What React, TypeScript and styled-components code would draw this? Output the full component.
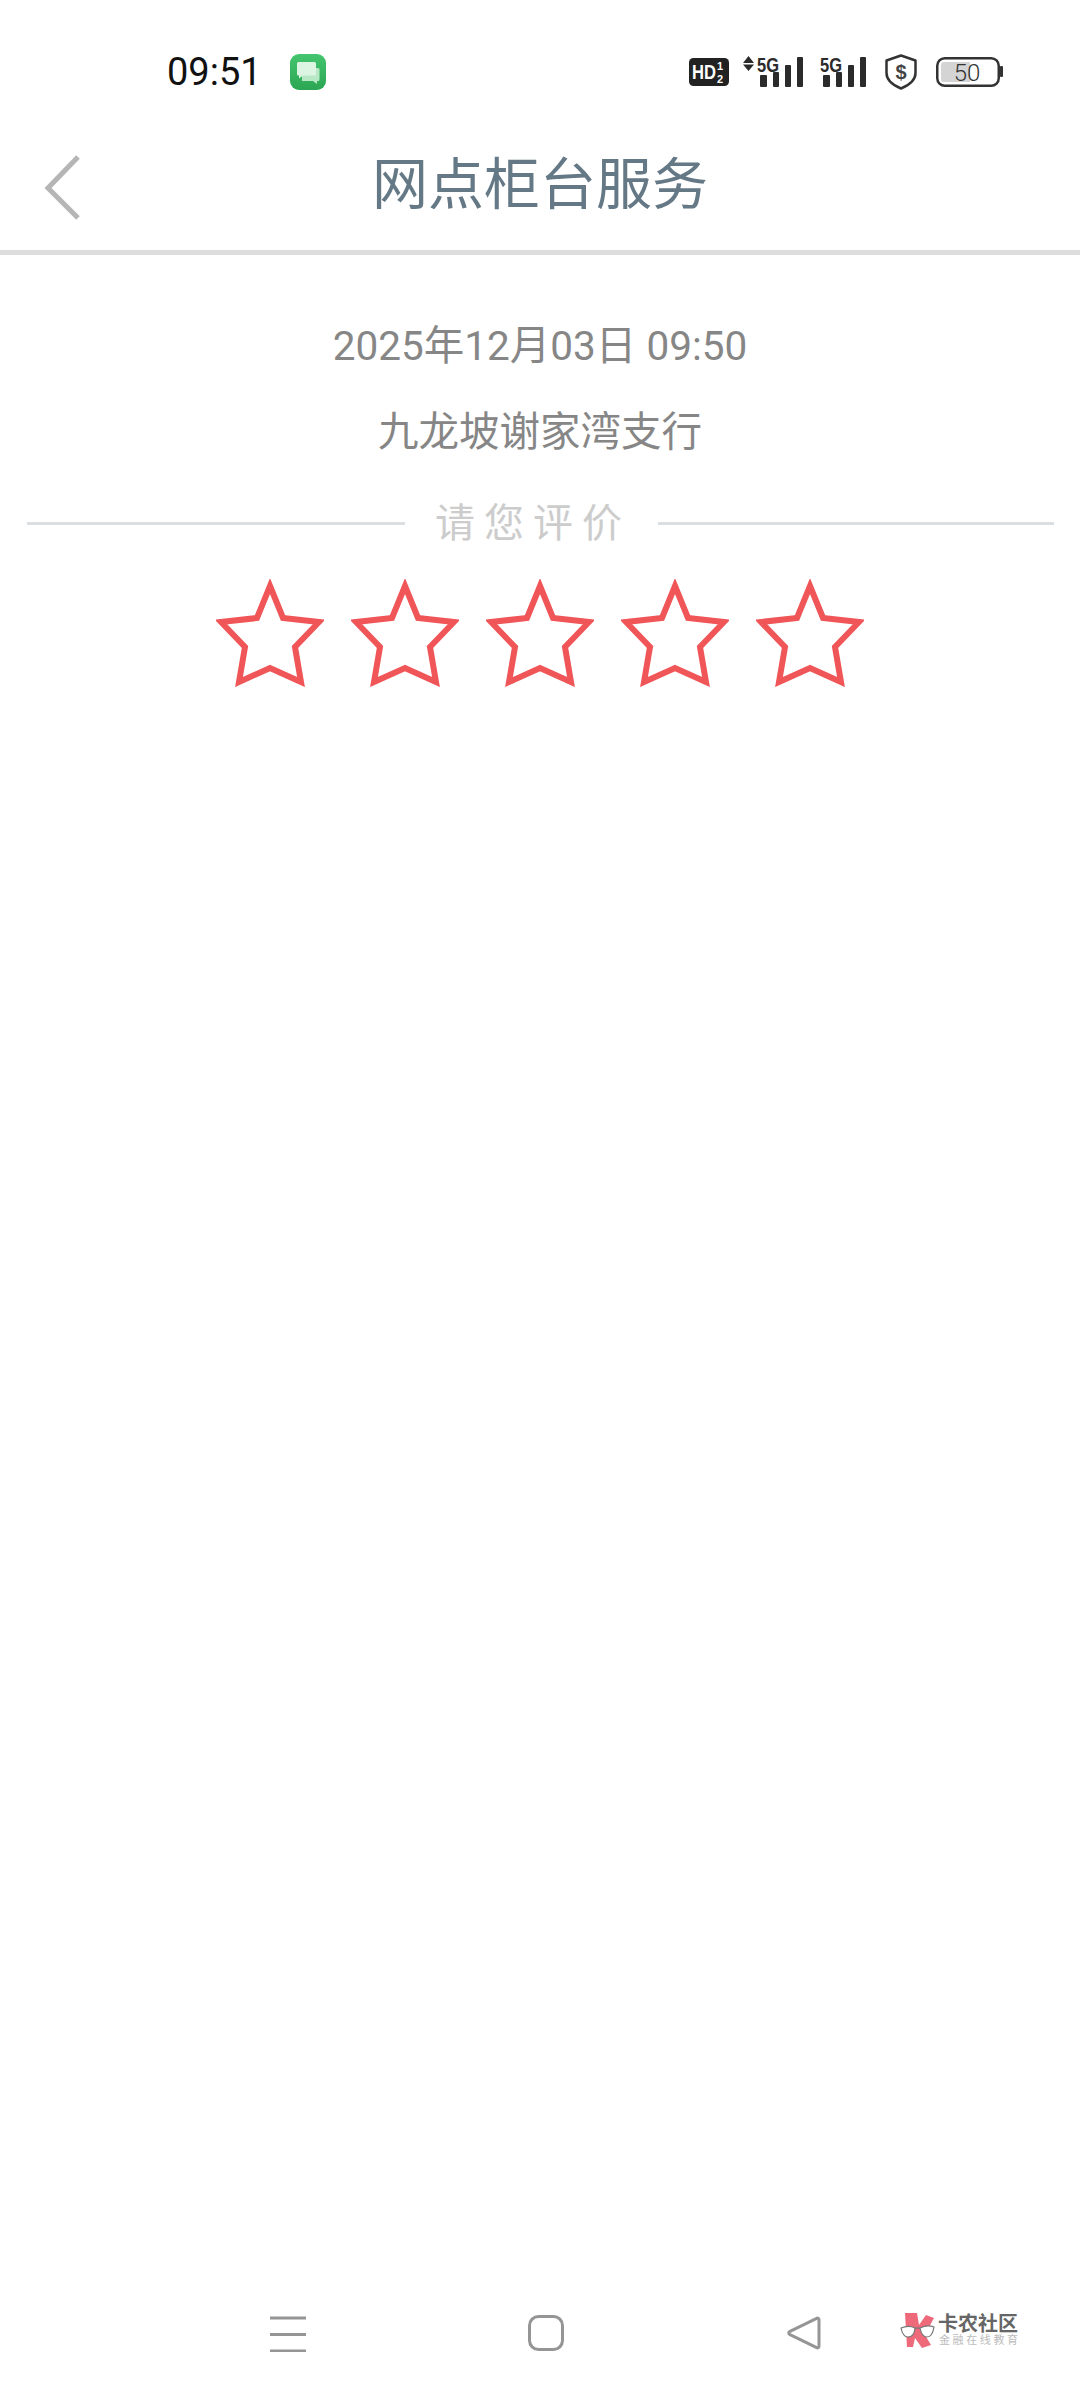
import React from "react";
import styled, { createGlobalStyle } from "styled-components";

const CJK = `Roboto, "Noto Sans CJK SC", sans-serif`;

const Global = createGlobalStyle`
  html, body { margin: 0; padding: 0; background: #fff; }
  * { box-sizing: border-box; }
`;
const Page = styled.div`
  width: 1080px; height: 2400px; display: flex; flex-direction: column;
  background: #fff; font-family: ${CJK};
`;
const StatusBar = styled.div`
  height: 118px; padding: 54px 77px 0 167px; display: flex; align-items: flex-start;
`;
const StatusRow = styled.div`
  height: 36px; flex: 1; display: flex; align-items: center;
`;
const Clock = styled.span`
  font-size: 38px; line-height: 36px; color: #111; width: 123px;
`;
const StatusIcons = styled.div`
  margin-left: auto; display: flex; align-items: center;
`;
const StatusGlyph = styled.svg<{ $gap: number }>`
  display: block; margin-left: ${(p) => p.$gap}px; flex: none;
`;
const Header = styled.header`
  height: 137px; border-bottom: 5px solid #dddddd; display: flex; align-items: center;
  justify-content: center; position: relative;
`;
const BackIcon = styled.svg`
  position: absolute; left: 43px; top: 34px;
`;
const Title = styled.h1`
  margin: 0; font-size: 56px; font-weight: 400; color: #657885; line-height: 1; padding-top: 2px;
`;
const Main = styled.main`
  flex: 1; display: flex; flex-direction: column; align-items: center;
`;
const DateLine = styled.div`
  margin-top: 66px; font-size: 40.500px; line-height: 50px; color: #868686;
`;
const Branch = styled.div`
  margin-top: 36px; font-size: 40.500px; line-height: 50px; color: #868686;
`;
const RateRow = styled.div`
  margin-top: 41px; width: 100%; padding: 0 26px 0 27px; display: flex; align-items: center; height: 50px;
`;
const RateLine = styled.div<{ $fixed?: number }>`
  height: 3px; background: #dcdfe2;
  ${(p) => (p.$fixed ? `width: ${p.$fixed}px; flex: none;` : "flex: 1;")}
`;
const RateLabel = styled.span`
  width: 253px; padding: 2px 0 0 30px; font-size: 40px; letter-spacing: 9px; color: #cccccc; white-space: nowrap; line-height: 50px;
`;
const Stars = styled.div`
  margin-top: 31px; display: flex; gap: 27px;
`;
const StarIcon = styled.svg`
  display: block;
`;
const NavBar = styled.nav`
  height: 118px; padding: 0 0 0 270px; display: flex; align-items: flex-start; position: relative;
`;
const NavIcon = styled.svg<{ $gap: number; $top: number }>`
  display: block; margin-left: ${(p) => p.$gap}px; margin-top: ${(p) => p.$top}px; flex: none;
`;
const Watermark = styled.div`
  margin-left: 79px; margin-top: 31px; height: 36px; display: flex; gap: 3px; align-items: flex-start;
`;
const WatermarkText = styled.div`
  display: flex; flex-direction: column; padding-top: 1px;
`;
const WatermarkName = styled.span`
  font-size: 20px; line-height: 20px; font-weight: 700; color: #666; white-space: nowrap;
`;
const WatermarkSub = styled.span`
  font-size: 11px; line-height: 14px; letter-spacing: 2.600px; color: #bbb; white-space: nowrap; margin-left: 1px;
`;

const Star = () => (
  <StarIcon width="108" height="108" viewBox="0 0 108 108">
    <polygon
      points="54,7 67,39 103,43 79,68 85,103 54,89 23,103 29,68 5,43 41,39"
      fill="none"
      stroke="#f05558"
      strokeWidth="6"
      strokeMiterlimit="8"
    />
  </StarIcon>
);

const Bars = ({ x }: { x: number }) => (
  <g fill="#2b2b2b">
    <rect x={x} y={19} width={7} height={12} rx={1} />
    <rect x={x + 13} y={16} width={6} height={15} rx={1} />
    <rect x={x + 25} y={9} width={6} height={22} rx={1} />
    <rect x={x + 37} y={1} width={6} height={30} rx={1} />
  </g>
);

const App = () => (
  <Page>
    <Global />
    <StatusBar>
      <StatusRow>
        <Clock>09:51</Clock>
        <svg width="36" height="36" viewBox="0 0 36 36">
          <defs>
            <linearGradient id="g" x1="0" y1="0" x2="0" y2="1">
              <stop offset="0" stopColor="#45c56f" />
              <stop offset="1" stopColor="#2ba653" />
            </linearGradient>
          </defs>
          <rect width="36" height="36" rx="9" fill="url(#g)" />
          <path d="M12 14h16a1.500 1.500 0 0 1 1.500 1.500v10a1.500 1.500 0 0 1-1.500 1.500h-1v3l-4-3H12z" fill="#b9e8c6" />
          <path d="M8.500 8h16a1.500 1.500 0 0 1 1.500 1.500V20a1.500 1.500 0 0 1-1.500 1.500H13l-4 3v-3h-.5A1.500 1.500 0 0 1 7 20V9.500A1.500 1.500 0 0 1 8.500 8z" fill="#dcf5e2" />
        </svg>
        <StatusIcons>
          <StatusGlyph $gap={0} width="40" height="28" viewBox="0 0 40 28">
            <rect width="40" height="28" rx="4.500" fill="#222" />
            <text x="3" y="21" fontFamily="Liberation Sans" fontWeight="700" fontSize="21" fill="#fff" textLength="24" lengthAdjust="spacingAndGlyphs">HD</text>
            <text x="28" y="12" fontFamily="Liberation Sans" fontWeight="700" fontSize="11" fill="#fff">1</text>
            <text x="28" y="25" fontFamily="Liberation Sans" fontWeight="700" fontSize="11" fill="#fff">2</text>
          </StatusGlyph>
          <StatusGlyph $gap={14} width="60" height="44" viewBox="0 -6 60 44">
            <path d="M5.500 0l5.500 7H0zM0 8.500h11l-5.500 6.500z" fill="#2b2b2b" />
            <text x="14" y="15.500" fontFamily="Liberation Sans" fontWeight="700" fontSize="21" fill="#2b2b2b" textLength="22" lengthAdjust="spacingAndGlyphs">5G</text>
            <Bars x={17} />
          </StatusGlyph>
          <StatusGlyph $gap={17} width="46" height="44" viewBox="0 -6 46 44">
            <text x="0" y="15.500" fontFamily="Liberation Sans" fontWeight="700" fontSize="21" fill="#2b2b2b" textLength="22" lengthAdjust="spacingAndGlyphs">5G</text>
            <Bars x={3} />
          </StatusGlyph>
          <StatusGlyph $gap={19} width="32" height="36" viewBox="0 0 32 36">
            <path d="M16 1.500L30.500 6.500V19c0 7-6 12-14.500 15.500C7.500 31 1.500 26 1.500 19V6.500z" fill="none" stroke="#333" strokeWidth="2.500" strokeLinejoin="round" />
            <text x="16" y="24.500" textAnchor="middle" fontFamily="Liberation Sans" fontWeight="700" fontSize="20" fill="#444">$</text>
          </StatusGlyph>
          <StatusGlyph $gap={19} width="67" height="30" viewBox="0 0 67 30">
            <rect x="1.250" y="1.250" width="61.500" height="27.500" rx="7.500" fill="#fff" stroke="#333" strokeWidth="2.500" />
            <path d="M8 5h26v20H8a3 3 0 0 1-3-3V8a3 3 0 0 1 3-3z" fill="#d4d4d4" />
            <text x="31" y="23.500" textAnchor="middle" fontFamily="Roboto" fontSize="24" fontWeight="300" fill="#333">50</text>
            <rect x="64" y="9" width="3" height="11" rx="1" fill="#333" />
          </StatusGlyph>
        </StatusIcons>
      </StatusRow>
    </StatusBar>
    <Header>
      <BackIcon width="40" height="70" viewBox="0 0 40 70">
        <path d="M35 5L5 36l30 30" fill="none" stroke="#b5b5b5" strokeWidth="5" />
      </BackIcon>
      <Title>网点柜台服务</Title>
    </Header>
    <Main>
      <DateLine>2025年12月03日 09:50</DateLine>
      <Branch>九龙坡谢家湾支行</Branch>
      <RateRow>
        <RateLine $fixed={378} />
        <RateLabel>请您评价</RateLabel>
        <RateLine />
      </RateRow>
      <Stars>
        <Star />
        <Star />
        <Star />
        <Star />
        <Star />
      </Stars>
    </Main>
    <NavBar>
      <NavIcon $gap={0} $top={34} width="36" height="36" viewBox="0 0 36 36">
        <path d="M0 2h36M0 18.500h36M0 35h36" stroke="#959595" strokeWidth="3" />
      </NavIcon>
      <NavIcon $gap={222} $top={33} width="36" height="36" viewBox="0 0 36 36">
        <rect x="1.500" y="1.500" width="33" height="33" rx="9" fill="none" stroke="#959595" strokeWidth="3" />
      </NavIcon>
      <NavIcon $gap={223} $top={34} width="34" height="34" viewBox="0 0 34 34">
        <path d="M32 3.500v27a1.500 1.500 0 0 1-2.300 1.200L2.500 18.300a1.500 1.500 0 0 1 0-2.600L29.700 2.300A1.500 1.500 0 0 1 32 3.500z" fill="none" stroke="#959595" strokeWidth="3" strokeLinejoin="round" />
      </NavIcon>
      <Watermark>
        <svg width="35" height="36" viewBox="0 0 35 36">
          <path d="M5 0h12l2 12 7-10 8 3-6 11-3 6 6 10-9 3-7-10-2 9H7z" fill="#ee6a7b" />
          <path d="M1 15c5-2 10-2 14 0-.5 6-3 9-7 9s-6-4-7-9zM20 15c4-2 9-3 14-1-1 6-3 10-7 10s-6-4-7-9z" fill="#fff" stroke="#777" strokeWidth="1.200" />
          <path d="M15 15.500c2-1 3.500-1 5 0" fill="none" stroke="#777" strokeWidth="1.200" />
        </svg>
        <WatermarkText>
          <WatermarkName>卡农社区</WatermarkName>
          <WatermarkSub>金融在线教育</WatermarkSub>
        </WatermarkText>
      </Watermark>
    </NavBar>
  </Page>
);

export default App;
